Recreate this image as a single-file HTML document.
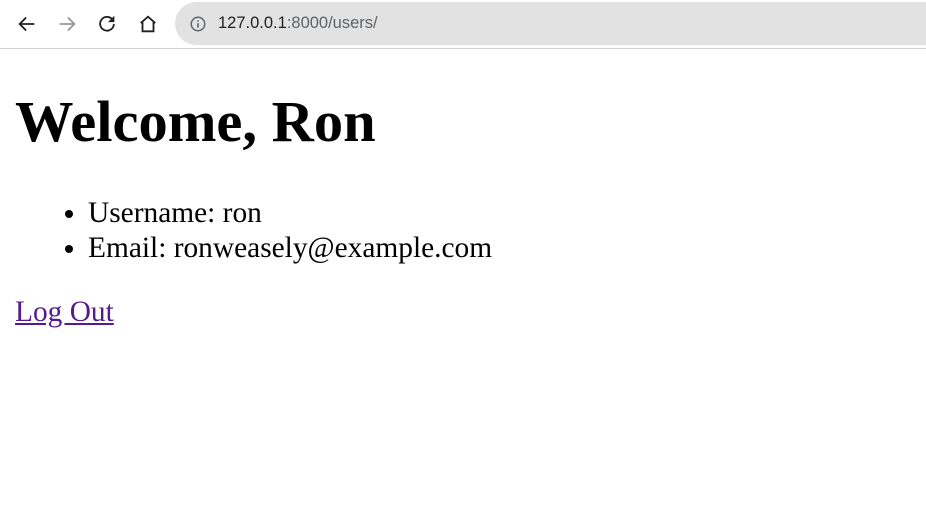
<!DOCTYPE html>
<html><head><style>
html,body{margin:0;padding:0;background:#fff;width:926px;height:507px;overflow:hidden}
.bar{height:48px;border-bottom:1px solid #d0d0d0;position:relative;background:#fff}
.addr{position:absolute;left:175px;top:2px;right:-30px;height:43px;border-radius:22px;background:#e2e2e2}
.url{position:absolute;left:218px;top:14px;font:16.5px "Liberation Sans",sans-serif;color:#202124}
.url span{color:#5f6368}
svg{position:absolute}
.content{margin:0 15px;font-family:"Liberation Serif",serif;font-size:29.4px}
h1{font-size:58.5px;margin:38px 0 40px;line-height:69px}
ul{margin:0 0 30px;padding-left:73px;line-height:35px}
a{color:#551a8b}
</style></head><body>
<div class="bar">
<svg style="left:16px;top:13px" width="22" height="22" viewBox="0 0 24 24"><path d="M20 12H5M11 5l-7 7 7 7" fill="none" stroke="#202124" stroke-width="2"/></svg>
<svg style="left:56px;top:13px" width="22" height="22" viewBox="0 0 24 24"><path d="M4 12h15M13 5l7 7-7 7" fill="none" stroke="#9a9a9a" stroke-width="2"/></svg>
<svg style="left:96px;top:13px" width="22" height="22" viewBox="0 0 24 24"><path d="M18.5 8A7.5 7.5 0 1 0 19.5 12" fill="none" stroke="#202124" stroke-width="2"/><path d="M20 3v7h-7z" fill="#202124"/></svg>
<svg style="left:137px;top:13px" width="22" height="22" viewBox="0 0 24 24"><path d="M4 11L12 4l8 7M6 10v10h12V10" fill="none" stroke="#202124" stroke-width="2"/></svg>
<div class="addr"></div>
<svg style="left:189px;top:15px" width="18" height="18" viewBox="0 0 20 20"><circle cx="10" cy="10" r="7.5" fill="none" stroke="#5f6368" stroke-width="1.6"/><path d="M10 9v5M10 6v1.5" stroke="#5f6368" stroke-width="1.8"/></svg>
<div class="url">127.0.0.1<span>:8000/users/</span></div>
</div>
<div class="content">
<h1>Welcome, Ron</h1>
<ul><li>Username: ron</li><li>Email: ronweasely@example.com</li></ul>
<a href="#">Log Out</a>
</div>
</body></html>
